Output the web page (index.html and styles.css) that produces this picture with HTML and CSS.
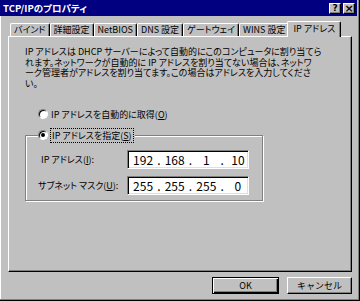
FILE: index.html
```html
<!DOCTYPE html>
<html lang="ja">
<head>
  <meta charset="UTF-8">
  <title>TCP/IPのプロパティ</title>
  <link rel="stylesheet" href="styles.css">
</head>
<body>
  <div class="window">
    <div class="titlebar">
      <span class="title">TCP/IPのプロパティ</span>
      <div class="title-btns">
        <span class="tbtn">?</span>
        <span class="tbtn close">×</span>
      </div>
    </div>
    <div class="content">
      <div class="tabs">
        <div class="tab">バインド</div>
        <div class="tab">詳細設定</div>
        <div class="tab">NetBIOS</div>
        <div class="tab">DNS 設定</div>
        <div class="tab">ゲートウェイ</div>
        <div class="tab">WINS 設定</div>
        <div class="tab active">IP アドレス</div>
      </div>
      <div class="panel">
        <p class="desc">IP アドレスは DHCP サーバーによって自動的にこのコンピュータに割り当てら<br>れます。ネットワークが自動的に IP アドレスを割り当てない場合は、ネットワ<br>ーク管理者がアドレスを割り当てます。この場合はアドレスを入力してくださ<br>い。</p>
        <div class="radio auto"><span class="circle"></span>IP アドレスを自動的に取得(<u>O</u>)</div>
        <fieldset class="group">
          <legend><div class="radio"><span class="circle checked"></span><span class="focus">IP アドレスを指定(<u>S</u>)</span></div></legend>
          <div class="row">
            <label class="lbl first">IP アドレス(<u>I</u>):</label>
            <div class="ipbox">
              <span class="oct">192</span><span class="sep">.</span><span class="oct">168</span><span class="sep">.</span><span class="oct">1</span><span class="sep">.</span><span class="oct">10</span>
            </div>
          </div>
          <div class="row">
            <label class="lbl">サブネット マスク(<u>U</u>):</label>
            <div class="ipbox">
              <span class="oct">255</span><span class="sep">.</span><span class="oct">255</span><span class="sep">.</span><span class="oct">255</span><span class="sep">.</span><span class="oct">0</span>
            </div>
          </div>
        </fieldset>
      </div>
      <div class="buttons">
        <button class="btn default">OK</button>
        <button class="btn">キャンセル</button>
      </div>
    </div>
  </div>
</body>
</html>
```
FILE: styles.css
```css
* {
  box-sizing: border-box;
}
body {
  margin: 0;
  background-color: #c0c0c0;
  font-family: "Noto Sans CJK JP", sans-serif;
  font-size: 9px;
  font-feature-settings: "palt" 1;
  color: #000;
}
.window {
  width: 360px;
  height: 301px;
  display: flex;
  flex-direction: column;
  background-color: #c0c0c0;
  border-right: 1px solid #000;
  border-bottom: 1px solid #000;
  box-shadow: inset -1px -1px #808080, inset 1px 0 #fff;
}
.titlebar {
  height: 16px;
  margin-right: 2px;
  background-color: #000080;
  color: #fff;
  display: flex;
  align-items: center;
  justify-content: space-between;
  padding: 0 2px 0 3px;
}
.title {
  font-weight: bold;
  font-size: 9.5px;
}
.title-btns {
  display: flex;
  gap: 1px;
}
.tbtn {
  width: 12px;
  height: 11px;
  background-color: #c0c0c0;
  color: #000;
  font-family: "DejaVu Sans", sans-serif;
  font-weight: bold;
  font-size: 9px;
  line-height: 9px;
  text-align: center;
  border: 1px solid;
  border-color: #fff #000 #000 #fff;
  box-shadow: inset -1px -1px #808080;
}
.tbtn.close {
  margin-left: 1px;
  font-size: 11px;
}
.content {
  padding: 6px 0 0 8px;
}
.tabs {
  display: flex;
  align-items: flex-end;
  height: 14px;
  padding-left: 2px;
}
.tab {
  height: 13px;
  line-height: 12px;
  padding: 0 3px;
  border-top: 1px solid #fff;
  border-left: 1px solid #fff;
  border-right: 1px solid #000;
  box-shadow: inset -1px 0 #808080;
  border-radius: 2px 2px 0 0;
  white-space: nowrap;
}
.tab.active {
  height: 16px;
  line-height: 14px;
  margin: 0 -2px -1px;
  padding: 0 5px;
  background-color: #c0c0c0;
  position: relative;
  z-index: 1;
}
.panel {
  width: 344px;
  height: 236px;
  border: 1px solid;
  border-color: #fff #000 #000 #fff;
  box-shadow: inset -1px -1px #808080;
  padding: 10px 0 0 16px;
}
.desc {
  margin: 0;
  line-height: 10.5px;
  white-space: nowrap;
}
.radio {
  display: flex;
  align-items: center;
  height: 12px;
  white-space: nowrap;
}
.radio.auto {
  margin: 19px 0 0 13px;
}
.circle {
  width: 10px;
  height: 10px;
  margin-right: 3px;
  border-radius: 50%;
  background-color: #fff;
  border: 1px solid;
  border-color: #808080 #fff #fff #808080;
  box-shadow: inset 1px 1px #000;
  display: flex;
  align-items: center;
  justify-content: center;
}
.circle.checked::after {
  content: "";
  width: 4px;
  height: 4px;
  border-radius: 50%;
  background-color: #000;
}
.focus {
  outline: 1px dotted #000;
  padding: 0 1px;
}
.group {
  width: 238px;
  margin: 9px 0 0 0;
  padding: 0 13px 5px 12px;
  border: 1px solid #808080;
  box-shadow: inset 1px 1px #fff, 1px 1px #fff;
}
.group legend {
  padding: 0 2px 0 0;
  background-color: #c0c0c0;
}
.row {
  display: flex;
  align-items: center;
  justify-content: space-between;
  margin-top: 9px;
}
.row + .row {
  margin-top: 7px;
}
.lbl.first {
  padding-left: 3px;
}
.ipbox {
  width: 122px;
  height: 19px;
  background-color: #fff;
  border: 1px solid;
  border-color: #808080 #fff #fff #808080;
  box-shadow: inset 1px 1px #000, inset -1px -1px #dfdfdf;
  display: flex;
  align-items: center;
  padding-left: 5px;
  font-family: "Noto Sans CJK JP", sans-serif;
  font-size: 12px;
  font-feature-settings: normal;
}
.oct {
  width: 21px;
  text-align: center;
}
.sep {
  width: 12px;
  text-align: center;
}
.buttons {
  display: flex;
  justify-content: flex-end;
  gap: 8px;
  width: 344px;
  margin-top: 5px;
}
.btn {
  height: 17px;
  padding: 0;
  font-family: inherit;
  font-size: 9px;
  color: #000;
  background-color: #c0c0c0;
  border: 1px solid;
  border-color: #fff #000 #000 #fff;
  box-shadow: inset -1px -1px #808080;
  width: 65px;
}
.btn.default {
  width: 67px;
  border: 1px solid #000;
  box-shadow: inset 1px 1px #fff, inset -1px -1px #000, inset -2px -2px #808080;
}
```
